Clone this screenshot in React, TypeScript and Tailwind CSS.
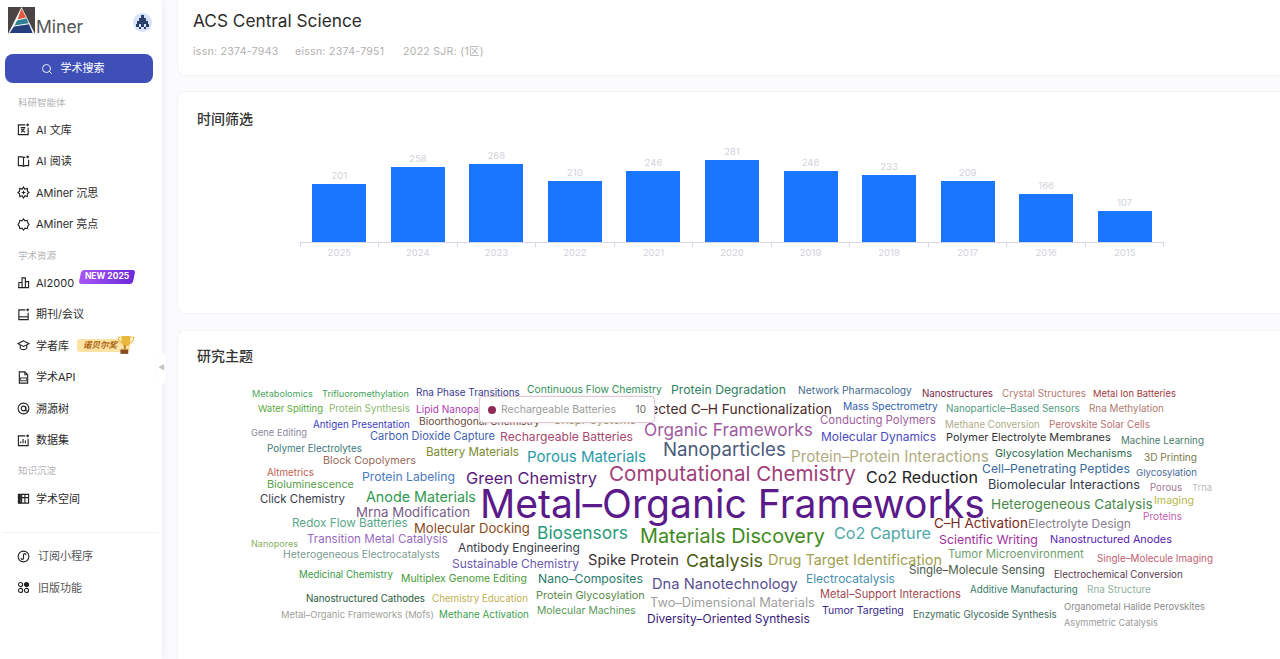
import { Search } from "lucide-react";
import type { ReactNode } from "react";

const FONT = "font-['Inter','Noto_Sans_CJK_SC',sans-serif]";

const years = [
  { year: 2025, value: 201, h: 58 },
  { year: 2024, value: 258, h: 75 },
  { year: 2023, value: 268, h: 78 },
  { year: 2022, value: 210, h: 61 },
  { year: 2021, value: 246, h: 71 },
  { year: 2020, value: 281, h: 82 },
  { year: 2019, value: 246, h: 71 },
  { year: 2018, value: 233, h: 67 },
  { year: 2017, value: 209, h: 61 },
  { year: 2016, value: 166, h: 48 },
  { year: 2015, value: 107, h: 31 },
];

// text, left, right, centre y, colour
const words: [string, number, number, number, string][] = [
  ["Metabolomics", 252, 313, 394, "#4aa564"],
  ["Trifluoromethylation", 322, 409, 394, "#3f9f55"],
  ["Rna Phase Transitions", 416, 520, 393, "#3b3b8f"],
  ["Continuous Flow Chemistry", 527, 662, 390, "#2f8f58"],
  ["Protein Degradation", 671, 786, 390, "#2f8060"],
  ["Network Pharmacology", 798, 912, 390, "#3f6a8f"],
  ["Nanostructures", 922, 993, 394, "#7a2a4a"],
  ["Crystal Structures", 1002, 1086, 394, "#b57a70"],
  ["Metal Ion Batteries", 1093, 1176, 394, "#a03a40"],
  ["Water Splitting", 258, 323, 409, "#5aa83c"],
  ["Protein Synthesis", 329, 410, 409, "#8cb870"],
  ["Lipid Nanoparticles", 416, 508, 409, "#b03ab0"],
  ["Directed C–H Functionalization", 632, 832, 410, "#4a2a2a"],
  ["Mass Spectrometry", 843, 938, 406, "#2f5fb0"],
  ["Nanoparticle–Based Sensors", 946, 1080, 409, "#4f9a80"],
  ["Rna Methylation", 1089, 1164, 409, "#b07a70"],
  ["Antigen Presentation", 313, 410, 425, "#4040c0"],
  ["Bioorthogonal Chemistry", 419, 540, 421, "#6a4a3a"],
  ["Crispr Systems", 553, 636, 421, "#9a9a6a"],
  ["Conducting Polymers", 820, 936, 421, "#a060a0"],
  ["Methane Conversion", 945, 1040, 425, "#b0ac8a"],
  ["Perovskite Solar Cells", 1049, 1150, 425, "#b87070"],
  ["Gene Editing", 251, 307, 433, "#8a8aa0"],
  ["Carbon Dioxide Capture", 370, 495, 437, "#3f5fb0"],
  ["Rechargeable Batteries", 500, 633, 437, "#a84a70"],
  ["Organic Frameworks", 644, 813, 430, "#a05aa0"],
  ["Molecular Dynamics", 821, 936, 437, "#4a4ac0"],
  ["Polymer Electrolyte Membranes", 946, 1111, 437, "#333333"],
  ["Machine Learning", 1121, 1204, 441, "#4a7a6a"],
  ["Polymer Electrolytes", 267, 362, 449, "#3a7a7a"],
  ["Battery Materials", 426, 519, 453, "#7a8a30"],
  ["Nanoparticles", 663, 786, 450, "#4a5a7a"],
  ["Protein–Protein Interactions", 791, 989, 457, "#b0ac80"],
  ["Glycosylation Mechanisms", 995, 1132, 453, "#2a6a4a"],
  ["3D Printing", 1144, 1197, 457, "#7a7a4a"],
  ["Block Copolymers", 323, 416, 461, "#9a6a5a"],
  ["Porous Materials", 527, 646, 457, "#2a9aa8"],
  ["Computational Chemistry", 609, 856, 474, "#a0407a"],
  ["Co2 Reduction", 866, 978, 477, "#222222"],
  ["Cell–Penetrating Peptides", 982, 1130, 469, "#3a6a9a"],
  ["Glycosylation", 1136, 1197, 473, "#4a6a9a"],
  ["Altmetrics", 267, 314, 473, "#c06050"],
  ["Protein Labeling", 362, 455, 477, "#4a7ac0"],
  ["Green Chemistry", 466, 597, 478, "#5a1a7a"],
  ["Bioluminescence", 267, 354, 485, "#5aa04a"],
  ["Biomolecular Interactions", 988, 1140, 485, "#333a4a"],
  ["Porous", 1150, 1182, 488, "#a07a90"],
  ["Trna", 1192, 1212, 488, "#bbbbbb"],
  ["Click Chemistry", 260, 345, 500, "#3a3a4a"],
  ["Anode Materials", 366, 476, 497, "#2f9a50"],
  ["Metal–Organic Frameworks", 480, 985, 504, "#5a1a8a"],
  ["Imaging", 1154, 1194, 501, "#b5b84a"],
  ["Heterogeneous Catalysis", 991, 1153, 505, "#4a8a4a"],
  ["Mrna Modification", 356, 470, 513, "#7a5a8a"],
  ["Proteins", 1143, 1182, 516, "#c060b0"],
  ["Redox Flow Batteries", 292, 408, 524, "#5aa88a"],
  ["C–H Activation", 934, 1028, 524, "#7a2a1a"],
  ["Electrolyte Design", 1028, 1131, 524, "#8a8090"],
  ["Molecular Docking", 414, 530, 529, "#8a4a1a"],
  ["Biosensors", 537, 628, 533, "#2a9a7a"],
  ["Materials Discovery", 640, 825, 537, "#3f8a20"],
  ["Co2 Capture", 834, 931, 533, "#50a8a8"],
  ["Transition Metal Catalysis", 307, 448, 540, "#9a6ac0"],
  ["Nanopores", 251, 298, 544, "#8ab060"],
  ["Scientific Writing", 939, 1038, 540, "#a030a0"],
  ["Nanostructured Anodes", 1050, 1172, 540, "#5a20b0"],
  ["Antibody Engineering", 458, 580, 548, "#3a3a4a"],
  ["Heterogeneous Electrocatalysts", 283, 440, 555, "#7a9a90"],
  ["Sustainable Chemistry", 452, 579, 564, "#6a5ab0"],
  ["Spike Protein", 588, 679, 560, "#3a3038"],
  ["Catalysis", 686, 763, 561, "#4a5a10"],
  ["Drug Target Identification", 768, 942, 560, "#a0a050"],
  ["Tumor Microenvironment", 948, 1084, 555, "#70a070"],
  ["Single–Molecule Imaging", 1097, 1213, 559, "#c06070"],
  ["Single–Molecule Sensing", 909, 1045, 571, "#4a5a4a"],
  ["Electrochemical Conversion", 1054, 1183, 575, "#5a3a50"],
  ["Medicinal Chemistry", 299, 393, 575, "#3a9a4a"],
  ["Multiplex Genome Editing", 401, 527, 579, "#4a9a3a"],
  ["Nano–Composites", 538, 643, 579, "#2a7a6a"],
  ["Dna Nanotechnology", 652, 798, 584, "#5a5090"],
  ["Electrocatalysis", 806, 895, 579, "#4a90b0"],
  ["Additive Manufacturing", 970, 1078, 590, "#3a7a6a"],
  ["Rna Structure", 1087, 1151, 590, "#90b0a0"],
  ["Nanostructured Cathodes", 306, 425, 599, "#2a5a3a"],
  ["Chemistry Education", 432, 528, 599, "#c0b050"],
  ["Protein Glycosylation", 536, 645, 595, "#5a8a4a"],
  ["Metal–Support Interactions", 820, 961, 595, "#a04a50"],
  ["Two–Dimensional Materials", 650, 815, 603, "#a0a0a0"],
  ["Organometal Halide Perovskites", 1064, 1205, 607, "#8a8a8a"],
  ["Metal–Organic Frameworks (Mofs)", 281, 434, 615, "#a0a09a"],
  ["Methane Activation", 439, 529, 615, "#40a050"],
  ["Molecular Machines", 537, 636, 611, "#5a9a5a"],
  ["Tumor Targeting", 822, 904, 611, "#3a2a8a"],
  ["Enzymatic Glycoside Synthesis", 913, 1057, 615, "#3a6a5a"],
  ["Diversity–Oriented Synthesis", 647, 810, 619, "#3a1a7a"],
  ["Asymmetric Catalysis", 1064, 1158, 623, "#999999"],
];

// font size that makes a word as wide as it is in the cloud
const ctx = document.createElement("canvas").getContext("2d")!;
ctx.font = "100px Inter";
const fitSize = (text: string, width: number) => (width / ctx.measureText(text).width) * 100;

const Ico = ({ children }: { children: ReactNode }) => (
  <svg width="13" height="13" viewBox="0 0 14 14" fill="none" stroke="#222" strokeWidth="1.2" className="shrink-0">
    {children}
  </svg>
);

const icons: Record<string, ReactNode> = {
  wenku: <Ico><path d="M9 2H1.500v10.500H12V5" /><path d="M4 5h5M4.500 10L8 6M4.500 6.500L8.500 10" /><path d="M11.500 .5v3M10 2h3" /></Ico>,
  read: <Ico><path d="M9 2.500H7L5.500 2H1.500v9.500h4l1.500.7 1.500-.7h4V5" /><path d="M7 3v8.500" /><path d="M11.500 .5v3M10 2h3" /></Ico>,
  think: <Ico><path d="M7 1l1.500 2.500L11 2.500l.2 3L13 7l-1.800 1.500-.2 3-2.500-1L7 13l-1.500-2.500-2.500 1-.2-3L1 7l1.800-1.500.2-3 2.500 1z" /><path d="M5 7h4M7 5v4" /></Ico>,
  light: <Ico><path d="M7 1l1.600 2 2.400-.5.500 2.500L13 7l-1.500 2-.5 2.500-2.400-.5L7 13l-1.600-2-2.400.5L2.500 9 1 7l1.500-2L3 2.500l2.400.5z" /></Ico>,
  bars: <Ico><path d="M1 12.500h12M2 12.500V7h3.500v5.500M5.500 12.500V2H9v10.500M9 6h3.500v6.500" /></Ico>,
  journal: <Ico><path d="M9 2H2v10.500h10V5" /><path d="M2 9.500h10" /><path d="M11.500 .5v3M10 2h3" /></Ico>,
  scholar: <Ico><path d="M7 2L1 5l6 3 6-3z" /><path d="M3.500 6.500V10c1.500 2 5.500 2 7 0V6.500" /></Ico>,
  api: <Ico><path d="M8.500 1H2.500v12h9V4z" /><path d="M8.500 1v3h3" /><path d="M3.500 7.500h7v3h-7z" strokeWidth="1" /></Ico>,
  tree: <Ico><circle cx="7" cy="7" r="5.800" /><circle cx="7" cy="7" r="2.500" /><path d="M9.500 5v4c1 1.500 2.500 1 3 0" /></Ico>,
  data: <Ico><path d="M9 2H1.500v10.500H12V5" /><path d="M4 10V8M6.500 10V5.500M9 10V7" /><path d="M11.500 .5v3M10 2h3" /></Ico>,
  space: <Ico><path d="M1.500 2.500h11v9.500h-11zM5 2.500V12M8.500 2.500V12M1.500 6h11" /><path d="M2.500 3v9M3.500 3v9" /></Ico>,
  mini: <Ico><circle cx="7" cy="7" r="5.800" /><path d="M4.500 8.500a1.300 1.300 0 1 0 2.500 0V5.500a1.300 1.300 0 1 1 2.500 0" /></Ico>,
  old: <Ico><circle cx="3.800" cy="3.800" r="2.200" /><circle cx="3.800" cy="10.200" r="2.200" /><circle cx="10.200" cy="10.200" r="2.200" /><circle cx="10.200" cy="3.800" r="2.200" fill="#222" /></Ico>,
};

function NavRow({ icon, label, children }: { icon: string; label: string; children?: ReactNode }) {
  return (
    <div className="flex h-[31.5px] items-center gap-[6px] pl-[17px] text-[11px] text-[#2b2b2b]">
      {icons[icon]}
      <span className="whitespace-nowrap">{label}</span>
      {children}
    </div>
  );
}

function FootRow({ icon, label }: { icon: string; label: string }) {
  return (
    <div className="flex h-[31.5px] items-center gap-[8px] pl-[17px] text-[11px] text-[#555]">
      {icons[icon]}
      <span className="whitespace-nowrap">{label}</span>
    </div>
  );
}

function SectionLabel({ children }: { children: ReactNode }) {
  return <div className="flex h-[21px] items-center pl-[18px] text-[9.5px] text-[#b3b3b3]">{children}</div>;
}

function Logo() {
  return (
    <div className="flex items-end">
      <svg width="27" height="27" viewBox="0 0 27 27">
        <rect width="27" height="27" fill="#4a4444" />
        <path d="M13.500 0L0 27h27z" fill="#fff" />
        <path d="M13.500 1.500L18 10.500 9.500 12.500z" fill="#e2573f" />
        <path d="M9 13.500l9.500-2.300 2.200 5L6.500 18.500z" fill="#2f7f94" />
        <path d="M6 19.500l15-2.300 3.700 8.800H1.500z" fill="#26407f" />
      </svg>
      <span className="ml-[1px] text-[17.500px] leading-[14px] text-[#555]">Miner</span>
    </div>
  );
}

function Avatar() {
  return (
    <div className="flex h-[19px] w-[19px] items-center justify-center rounded-full bg-[#d6e2f7]">
      <svg width="15" height="15" viewBox="0 0 15 15" fill="#2d3f6b">
        <path d="M6 0h3v3H6zM4 3h7v3H4zM2 6h11v3H2zM1 9h3v3H1zM6 9h3v3H6zM11 9h3v3h-3zM4 12h2v2H4zM9 12h2v2H9z" />
      </svg>
    </div>
  );
}

function Sidebar() {
  return (
    <aside className="relative z-10 flex h-[659px] w-[162px] shrink-0 flex-col bg-white shadow-[2px_0_6px_rgba(90,100,200,0.08)]">
      <div className="flex h-[54px] items-start justify-between pl-[8px] pr-[10px] pt-[7px]">
        <Logo />
        <div className="mt-[6px]"><Avatar /></div>
      </div>
      <div className="ml-[5px] mr-[9px] flex h-[29px] items-center justify-center gap-[8px] rounded-lg bg-[#3f4fb8] pr-[13px] text-[11px] text-white">
        <Search size={12} strokeWidth={1.8} />
        <span>学术搜索</span>
      </div>
      <div className="mt-[10px]"><SectionLabel>科研智能体</SectionLabel></div>
      <NavRow icon="wenku" label="AI 文库" />
      <NavRow icon="read" label="AI 阅读" />
      <NavRow icon="think" label="AMiner 沉思" />
      <NavRow icon="light" label="AMiner 亮点" />
      <div className="mt-[6px]"><SectionLabel>学术资源</SectionLabel></div>
      <NavRow icon="bars" label="AI2000">
        <span className="relative -top-[6px] flex h-[14px] w-[54px] items-center justify-center text-[8.500px] font-bold text-white">
          <span className="absolute inset-0 -skew-x-12 rounded-[3px] bg-gradient-to-r from-[#a855f7] to-[#6d28d9]" />
          <span className="relative">NEW 2025</span>
        </span>
      </NavRow>
      <NavRow icon="journal" label="期刊/会议" />
      <NavRow icon="scholar" label="学者库">
        <span className="relative ml-[2px] flex h-[13px] w-[53px] items-center rounded-[3px] bg-[#fde3a3] pl-[6px] text-[8.500px] font-bold italic text-[#a8620f]">
          诺贝尔奖
          <svg width="18" height="20" viewBox="0 0 16 18" className="absolute -right-[5px] -top-[4px]">
            <path d="M4 1h8v5c0 3-2 4-4 4S4 9 4 6z" fill="#e9b83c" />
            <path d="M4 2H1c0 3 1 4 3 5M12 2h3c0 3-1 4-3 5" fill="none" stroke="#e9b83c" />
            <path d="M3 13h7v4H3z" fill="#8a4a20" />
            <path d="M6 9h2v4H6z" fill="#c98a2c" />
          </svg>
        </span>
      </NavRow>
      <NavRow icon="api" label="学术API" />
      <NavRow icon="tree" label="溯源树" />
      <NavRow icon="data" label="数据集" />
      <div className="mt-[5px]"><SectionLabel>知识沉淀</SectionLabel></div>
      <div className="mt-[1px]"><NavRow icon="space" label="学术空间" /></div>
      <div className="mx-[3px] mt-[17px] border-t border-[#f2f2f4]" />
      <div className="mt-[8px]">
        <FootRow icon="mini" label="订阅小程序" />
        <FootRow icon="old" label="旧版功能" />
      </div>
      <div className="absolute -right-[4px] top-[353px] flex h-[31px] w-[9px] items-center justify-center rounded-[4px] bg-white text-[7px] text-[#c4c4c4] shadow-[0_0_2px_rgba(0,0,0,0.06)]">
        ◀
      </div>
    </aside>
  );
}

function Chart() {
  return (
    <div className="ml-[103px] mt-[24px] w-[864px]">
      <div className="flex h-[90px] items-end border-b border-[#d5d5e6]">
        {years.map((y) => (
          <div key={y.year} className="flex flex-1 flex-col items-center">
            <span className="mb-[2px] text-[9.500px] leading-[12px] text-[#d2d2d8]">{y.value}</span>
            <div className="w-[54px] bg-[#1a76ff]" style={{ height: y.h }} />
          </div>
        ))}
      </div>
      <div className="flex h-[4px] justify-between">
        {[...years, null].map((y, i) => (
          <div key={i} className="w-px bg-[#d5d5e6]" />
        ))}
      </div>
      <div className="flex">
        {years.map((y) => (
          <div key={y.year} className="flex-1 text-center text-[9.500px] leading-[12px] text-[#d2d2da]">
            {y.year}
          </div>
        ))}
      </div>
    </div>
  );
}

function WordCloud() {
  return (
    <div className="absolute inset-0">
      {words.map(([text, left, right, y, color]) => (
        <span
          key={text}
          className="absolute -translate-y-1/2 whitespace-nowrap leading-none"
          style={{ left: left - 162, top: y - 329, fontSize: fitSize(text, right - left), color }}
        >
          {text}
        </span>
      ))}
      <div className="absolute left-[317px] top-[67px] flex h-[27px] w-[176px] items-center rounded-[4px] border border-[#e3c6d3] bg-white pl-[8px] pr-[8px] text-[10.500px] text-[#9a9a9a] shadow-[0_0_4px_rgba(0,0,0,0.08)]">
        <span className="mr-[5px] h-[8px] w-[8px] rounded-full bg-[#8f2a55]" />
        <span>Rechargeable Batteries</span>
        <span className="ml-auto text-[10px] text-[#666]">10</span>
      </div>
    </div>
  );
}

export default function App() {
  return (
    <div className={`${FONT} flex h-[659px] w-[1280px] overflow-hidden bg-[#fbfbfd]`}>
      <Sidebar />
      <main className="flex min-w-0 flex-1 flex-col gap-[15px] pl-[15px]">
        <section className="-mr-2 h-[76px] shrink-0 rounded-bl-lg border-b border-l border-[#f3f3f6] bg-white pl-[15px] pt-[10px]">
          <h1 className="text-[17.250px] leading-[22px] text-[#2b2b2b]">ACS Central Science</h1>
          <div className="mt-[12px] flex text-[10.500px] tracking-[0.3px] text-[#b0b0b0]">
            <span className="w-[102px]">issn: 2374-7943</span>
            <span className="w-[108px]">eissn: 2374-7951</span>
            <span>2022 SJR: (1区)</span>
          </div>
        </section>
        <section className="-mr-2 h-[223px] shrink-0 rounded-l-lg border-y border-l border-[#f3f3f6] bg-white pl-[19px] pt-[17px]">
          <h2 className="text-[14px] font-medium leading-[20px] text-[#333]">时间筛选</h2>
          <Chart />
        </section>
        <section className="-mr-2 mt-[1px] flex-1 rounded-tl-lg border-l border-t border-[#f3f3f6] bg-white pl-[19px] pt-[15px]">
          <h2 className="text-[14px] font-medium leading-[20px] text-[#333]">研究主题</h2>
        </section>
      </main>
      <div className="pointer-events-none absolute left-[162px] top-[329px] h-[330px] w-[1118px] overflow-hidden">
        <WordCloud />
      </div>
    </div>
  );
}
